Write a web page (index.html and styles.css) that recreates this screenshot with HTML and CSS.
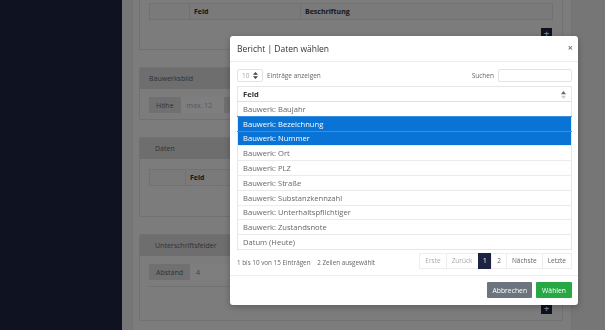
FILE: index.html
```html
<!DOCTYPE html>
<html lang="de">

<head>
  <meta charset="UTF-8">
  <title>Bericht | Daten wählen</title>
  <link rel="stylesheet" href="styles.css">
</head>

<body>
  <div class="app">
    <aside class="sidebar"></aside>

    <main class="main">
      <div class="panel">

        <div class="card card-top">
          <div class="card-body">
            <table class="grid">
              <tr>
                <th class="col-handle"></th>
                <th class="col-feld">Feld</th>
                <th>Beschriftung</th>
              </tr>
            </table>
            <div class="add-row"><span class="add">+</span></div>
          </div>
        </div>

        <div class="card">
          <div class="card-head card-head-narrow">Bauwerksbild</div>
          <div class="card-body card-body-form">
            <div class="input-group">
              <span class="addon">Höhe</span>
              <span class="input placeholder input-short">max. 12</span>
              <span class="addon">cm</span>
              <span class="input"></span>
            </div>
          </div>
        </div>

        <div class="card">
          <div class="card-head">Daten</div>
          <div class="card-body card-body-table">
            <table class="grid">
              <tr>
                <th class="col-handle col-handle-wide"></th>
                <th class="col-feld">Feld</th>
                <th>Beschriftung</th>
              </tr>
            </table>
            <div class="add-row"><span class="add">+</span></div>
          </div>
        </div>

        <div class="card">
          <div class="card-head">Unterschriftsfelder</div>
          <div class="card-body card-body-form">
            <div class="input-group">
              <span class="addon">Abstand</span>
              <span class="input">4</span>
            </div>
            <div class="rule"></div>
            <div class="add-row add-row-low"><span class="add">+</span></div>
          </div>
        </div>

      </div>
    </main>
  </div>

  <div class="backdrop"></div>

  <div class="modal">
    <div class="modal-header">
      <h2 class="modal-title">Bericht | Daten wählen</h2>
      <span class="close">×</span>
    </div>

    <div class="modal-body">
      <div class="dt-controls">
        <label class="dt-length">
          <span class="select">10
            <svg width="5" height="7" viewBox="0 0 5 7"><path d="M2.5 0 5 2.8H0zM2.5 7 0 4.2h5z" fill="#444"/></svg>
          </span>
          Einträge anzeigen
        </label>
        <label class="dt-search">Suchen <span class="search-box"></span></label>
      </div>

      <table class="dt">
        <thead>
          <tr>
            <th>Feld
              <svg class="sort" width="5" height="8" viewBox="0 0 5 8"><path d="M2.5 0 5 3.3H0z" fill="#666"/><path d="M2.5 8 0 4.7h5z" fill="#ccc"/></svg>
            </th>
          </tr>
        </thead>
        <tbody>
          <tr><td>Bauwerk: Baujahr</td></tr>
          <tr class="selected"><td>Bauwerk: Bezeichnung</td></tr>
          <tr class="selected"><td>Bauwerk: Nummer</td></tr>
          <tr><td>Bauwerk: Ort</td></tr>
          <tr><td>Bauwerk: PLZ</td></tr>
          <tr><td>Bauwerk: Straße</td></tr>
          <tr><td>Bauwerk: Substanzkennzahl</td></tr>
          <tr><td>Bauwerk: Unterhaltspflichtiger</td></tr>
          <tr><td>Bauwerk: Zustandsnote</td></tr>
          <tr><td>Datum (Heute)</td></tr>
        </tbody>
      </table>

      <div class="dt-footer">
        <div class="dt-info">1 bis 10 von 15 Einträgen <span class="dt-selected">2 Zeilen ausgewählt</span></div>
        <ul class="pagination">
          <li class="disabled">Erste</li>
          <li class="disabled">Zurück</li>
          <li class="active">1</li>
          <li>2</li>
          <li>Nächste</li>
          <li>Letzte</li>
        </ul>
      </div>
    </div>

    <div class="modal-footer">
      <button class="btn btn-secondary">Abbrechen</button>
      <button class="btn btn-success">Wählen</button>
    </div>
  </div>
</body>

</html>
```

FILE: styles.css
```css
* {
  box-sizing: border-box;
}

body {
  font-family: "Open Sans", Arial, sans-serif;
  margin: 0;
  width: 605px;
  height: 330px;
  overflow: hidden;
  background-color: #ececec;
  color: #555;
}

.app {
  display: flex;
  height: 330px;
}

.sidebar {
  width: 122px;
  flex: none;
  background-color: #1e2443;
}

.main {
  flex: 1;
  padding-left: 10px;
}

.panel {
  width: 440px;
  height: 100%;
  background-color: #f8f8f8;
  border-left: 1px solid #e6e6e6;
  border-right: 1px solid #e6e6e6;
  padding: 0 8px 0 6px;
  display: flex;
  flex-direction: column;
  gap: 17px;
}

.card {
  background-color: #f8f8f8;
  border: 1px solid #e3e3e3;
  border-radius: 2px;
}

.card-top {
  margin-top: -8px;
}

.card-head {
  height: 21px;
  line-height: 21px;
  padding-left: 15px;
  background-color: #dcdcdc;
  font-size: 7px;
  color: #666;
}

.card-head-narrow {
  padding-left: 9px;
}

.card-body {
  padding: 10px 9px 10px 9px;
}

.card-body-form {
  padding-top: 8px;
  padding-bottom: 6px;
}

.card-body-table {
  padding-bottom: 11px;
}

.grid {
  width: 100%;
  border-collapse: collapse;
}

.grid th {
  height: 16px;
  border: 1px solid #e2e2e2;
  background-color: #f4f4f4;
  font-size: 7px;
  font-weight: bold;
  color: #333;
  text-align: left;
  padding: 0 4px;
}

.col-handle {
  width: 40px;
}

.col-handle-wide {
  width: 36px;
}

.col-feld {
  width: 111px;
}

.add-row {
  display: flex;
  justify-content: flex-end;
  margin-top: 8px;
  padding-right: 1px;
}

.add-row-low {
  margin-top: 16px;
}

.add {
  width: 11px;
  height: 11px;
  background-color: #1c2441;
  color: #fff;
  font-size: 9px;
  font-weight: bold;
  line-height: 11px;
  text-align: center;
}

.input-group {
  display: flex;
  height: 16px;
  font-size: 7px;
}

.addon {
  display: flex;
  align-items: center;
  padding: 0 7px;
  background-color: #e0e0e0;
  color: #666;
}

.input {
  flex: 1;
  display: flex;
  align-items: center;
  padding: 0 6px;
  background-color: #fcfcfc;
  color: #888;
}

.input-short {
  flex: none;
  width: 43px;
}

.placeholder {
  color: #b3b3b3;
}

.rule {
  margin-top: 6px;
  border-top: 1px solid #e3e3e3;
}

.backdrop {
  position: fixed;
  inset: 0;
  background-color: rgba(0, 0, 0, 0.5);
}

.modal {
  position: absolute;
  left: 230px;
  top: 36px;
  width: 348px;
  height: 269px;
  background-color: #fff;
  border-radius: 3px;
  box-shadow: 0 2px 6px rgba(0, 0, 0, 0.25);
  display: flex;
  flex-direction: column;
}

.modal-header {
  position: relative;
  height: 26px;
  padding: 0 7px;
  display: flex;
  align-items: center;
  border-bottom: 1px solid #eee;
}

.modal-title {
  margin: 0;
  font-size: 8.5px;
  font-weight: normal;
  color: #333;
}

.close {
  position: absolute;
  right: 5px;
  top: 5px;
  font-size: 9px;
  font-weight: bold;
  color: #777;
}

.modal-body {
  padding: 7px 6px 6px 7px;
  border-bottom: 1px solid #eee;
}

.dt-controls {
  display: flex;
  justify-content: space-between;
  align-items: center;
  height: 13px;
  font-size: 6.5px;
  color: #666;
}

.dt-length,
.dt-search {
  display: flex;
  align-items: center;
  gap: 4px;
}

.select {
  display: flex;
  align-items: center;
  justify-content: space-between;
  width: 26px;
  height: 13px;
  padding: 0 4px;
  border: 1px solid #e3e3e3;
  border-radius: 2px;
  color: #aaa;
}

.search-box {
  width: 74px;
  height: 13px;
  border: 1px solid #e3e3e3;
  border-radius: 2px;
}

.dt {
  width: 100%;
  margin-top: 4px;
  border-collapse: collapse;
  border: 1px solid #e3e6ea;
  font-size: 7.6px;
}

.dt th {
  height: 15px;
  padding: 0 5px;
  text-align: left;
  color: #333;
  font-weight: bold;
  border-bottom: 1px solid #dde1e5;
  position: relative;
}

.sort {
  position: absolute;
  right: 5px;
  top: 4px;
}

.dt td {
  height: 14.8px;
  padding: 0 5px;
  border-top: 1px solid #e9ecef;
  color: #666;
}

.dt tr.selected td {
  background-color: #0a74d6;
  border-top-color: #3d8fdc;
  color: #fff;
}

.dt-footer {
  display: flex;
  justify-content: space-between;
  align-items: center;
  margin-top: 3px;
}

.dt-info {
  font-size: 6.3px;
  color: #666;
  padding-top: 4px;
}

.dt-selected {
  margin-left: 5px;
}

.pagination {
  display: flex;
  list-style: none;
  margin: 0;
  padding: 0;
  height: 16px;
  font-size: 6.5px;
}

.pagination li {
  display: flex;
  align-items: center;
  padding: 0 5px;
  border: 1px solid #eceef0;
  margin-left: -1px;
  color: #666;
}

.pagination li.disabled {
  color: #aaa;
}

.pagination li.active {
  background-color: #1c2441;
  border-color: #1c2441;
  color: #fff;
  padding: 0 4.5px;
}

.modal-footer {
  flex: 1;
  display: flex;
  justify-content: flex-end;
  align-items: center;
  gap: 4px;
  padding: 0 6px;
}

.btn {
  height: 16px;
  border: none;
  border-radius: 1px;
  padding: 0 5px;
  font-family: "Open Sans", Arial, sans-serif;
  font-size: 6.8px;
  color: #fff;
}

.btn-secondary {
  background-color: #6c757d;
}

.btn-success {
  background-color: #28a745;
  padding: 0 6px;
}
```
